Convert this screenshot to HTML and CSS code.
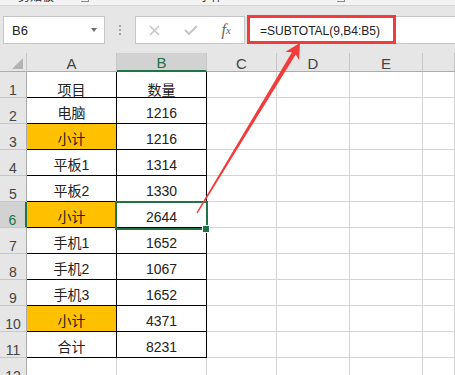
FILE: index.html
```html
<!DOCTYPE html>
<html lang="zh-CN">
<head>
  <meta charset="UTF-8">
  <title>SUBTOTAL</title>
  <meta name="viewport" content="width=device-width, initial-scale=1.0">
  <link rel="stylesheet" href="styles.css">
</head>
<body>
  <!-- bottom edge of the ribbon -->
  <div class="ribbon">
    <span class="g1">剪贴板</span>
    <span class="launch l1"></span>
    <span class="g2">字体</span>
    <span class="launch l2"></span>
    <span class="g3">对齐方式</span>
  </div>

  <!-- formula bar -->
  <div class="fbar">
    <div class="namebox">
      <span>B6</span>
      <span class="caret"></span>
    </div>
    <div class="dots"><i></i><i></i><i></i></div>
    <div class="fbtns">
      <span class="slot">
        <svg width="11" height="11" viewBox="0 0 11 11"><path d="M1 1L10 10M10 1L1 10" stroke="#c4c4c4" stroke-width="1.5" fill="none"/></svg>
      </span>
      <span class="slot">
        <svg width="14" height="10" viewBox="0 0 14 10"><path d="M1 5L5 9L13 1" stroke="#c4c4c4" stroke-width="2" fill="none"/></svg>
      </span>
      <span class="slot fx">f<small>x</small></span>
    </div>
    <div class="finput">
      <span class="hl">=SUBTOTAL(9,B4:B5)</span>
    </div>
  </div>

  <!-- sheet -->
  <div class="sheet">
    <div class="grid">
      <div class="corner"><span class="tri"></span></div>
      <div class="ch">A</div>
      <div class="ch sel">B</div>
      <div class="ch">C</div>
      <div class="ch">D</div>
      <div class="ch">E</div>
      <div class="ch"></div>

      <div class="rh">1</div><div class="t r1">项目</div><div class="t r1">数量</div><div></div><div></div><div></div><div></div>
      <div class="rh">2</div><div class="t">电脑</div><div class="t">1216</div><div></div><div></div><div></div><div></div>
      <div class="rh">3</div><div class="t sub">小计</div><div class="t">1216</div><div></div><div></div><div></div><div></div>
      <div class="rh">4</div><div class="t">平板1</div><div class="t">1314</div><div></div><div></div><div></div><div></div>
      <div class="rh">5</div><div class="t">平板2</div><div class="t">1330</div><div></div><div></div><div></div><div></div>
      <div class="rh sel">6</div><div class="t sub">小计</div><div class="t">2644</div><div></div><div></div><div></div><div></div>
      <div class="rh">7</div><div class="t">手机1</div><div class="t">1652</div><div></div><div></div><div></div><div></div>
      <div class="rh">8</div><div class="t">手机2</div><div class="t">1067</div><div></div><div></div><div></div><div></div>
      <div class="rh">9</div><div class="t">手机3</div><div class="t">1652</div><div></div><div></div><div></div><div></div>
      <div class="rh">10</div><div class="t sub">小计</div><div class="t">4371</div><div></div><div></div><div></div><div></div>
      <div class="rh">11</div><div class="t">合计</div><div class="t">8231</div><div></div><div></div><div></div><div></div>
      <div class="rh">12</div><div></div><div></div><div></div><div></div><div></div><div></div>
    </div>

    <!-- active cell B6 -->
    <div class="cursor"></div>
    <div class="handle"></div>
  </div>

  <!-- annotation arrow -->
  <svg class="arrow" width="455" height="375" viewBox="0 0 455 375">
    <polygon fill="#f23b3b" points="196.5,212.6 291.9,52.2 285.4,51.7 300,43 299,60 295.7,54.4 197.5,213.4"/>
  </svg>
</body>
</html>
```

FILE: styles.css
```css
body { margin: 0; width: 455px; height: 375px; overflow: hidden; position: relative; background: #e6e6e6; font-family: "Liberation Sans", "Noto Sans CJK SC", sans-serif; color: #222; }

.ribbon { display: flex; align-items: flex-end; height: 5px; overflow: hidden; background: #f3f3f3; border-bottom: 1px solid #d5d5d5; font-size: 12px; color: #333; }
.ribbon span { line-height: 12px; margin-bottom: 2px; flex: none; }
.g1 { margin-left: 18px; }
.g2 { margin-left: 110px; }
.g3 { margin-left: 114px; }
.ribbon .launch { width: 7px; height: 7px; border-right: 1px solid #888; border-bottom: 1px solid #888; margin-bottom: 3px; }
.l1 { margin-left: 27px; }
.l2 { margin-left: 114px; }

.fbar { display: flex; align-items: flex-start; height: 47px; padding-top: 10px; box-sizing: border-box; }
.namebox { display: flex; align-items: center; box-sizing: border-box; width: 102px; height: 28px; margin-left: 3px; padding: 0 7px 0 8px; background: #fff; border: 1px solid #c6c6c6; font-size: 13px; }
.caret { margin-left: auto; width: 0; height: 0; border-left: 3px solid transparent; border-right: 3px solid transparent; border-top: 4px solid #6f6f6f; }
.dots { display: flex; flex-direction: column; align-items: center; gap: 2px; width: 30px; padding-top: 9px; }
.dots i { width: 2px; height: 2px; background: #a6a6a6; }
.fbtns { display: flex; align-items: center; box-sizing: border-box; width: 110px; height: 28px; padding-left: 1px; background: #fff; border: 1px solid #c6c6c6; }
.slot { display: flex; justify-content: center; align-items: center; width: 36px; }
.fx { font-family: "Liberation Serif", serif; font-style: italic; font-size: 16px; color: #666; }
.fx small { font-size: 11px; }
.finput { display: flex; flex: 1; box-sizing: border-box; height: 28px; margin-left: 2px; background: #fff; border: 1px solid #c6c6c6; border-right: none; }
.hl { display: flex; align-items: center; box-sizing: border-box; width: 149px; margin: -2px 0 -1px -1px; padding: 2px 0 0 10px; border: 3px solid #f23b3b; font-size: 12px; white-space: nowrap; }

.sheet { position: relative; }
.grid { display: grid; grid-template-columns: 27px 90px 90px 70px 73px 73px 32px; grid-template-rows: 19px; grid-auto-rows: 26px; background: #fff; }
.grid > div { display: flex; justify-content: center; align-items: center; box-sizing: border-box; padding-top: 4px; border-right: 1px solid #d4d4d4; border-bottom: 1px solid #d4d4d4; font-size: 14px; line-height: 16px; white-space: nowrap; }

.grid > .corner { justify-content: flex-end; align-items: flex-end; padding: 0 3px 2px 0; background: #e6e6e6; border-right-color: #c6c6c6; border-bottom-color: #ababab; }
.tri { width: 0; height: 0; border-left: 11px solid transparent; border-bottom: 11px solid #b4b4b4; }
.grid > .ch { align-items: flex-end; padding-top: 0; background: #e6e6e6; border-right-color: #c6c6c6; border-bottom-color: #ababab; font-size: 15px; line-height: 14px; color: #444; }
.grid > .rh { align-items: flex-end; padding-top: 0; background: #e6e6e6; border-right-color: #ababab; border-bottom-color: #c6c6c6; line-height: 14px; color: #444; }
.grid > .ch.sel { background: #d2d2d2; border-bottom: 2px solid #217346; color: #217346; }
.grid > .rh.sel { background: #d2d2d2; border-right: 2px solid #217346; color: #217346; }

.grid > .t { border-right-color: #000; border-bottom-color: #000; }
.grid > .r1 { align-items: flex-end; padding-top: 0; line-height: 14px; }
.grid > .sub { background: #ffc000; }

.cursor { position: absolute; left: 115px; top: 148px; width: 93px; height: 29px; box-sizing: border-box; border: 2px solid #217346; }
.handle { position: absolute; left: 202px; top: 172px; width: 6px; height: 6px; background: #217346; border: 1px solid #fff; }

.arrow { position: absolute; left: 0; top: 0; pointer-events: none; }
```
